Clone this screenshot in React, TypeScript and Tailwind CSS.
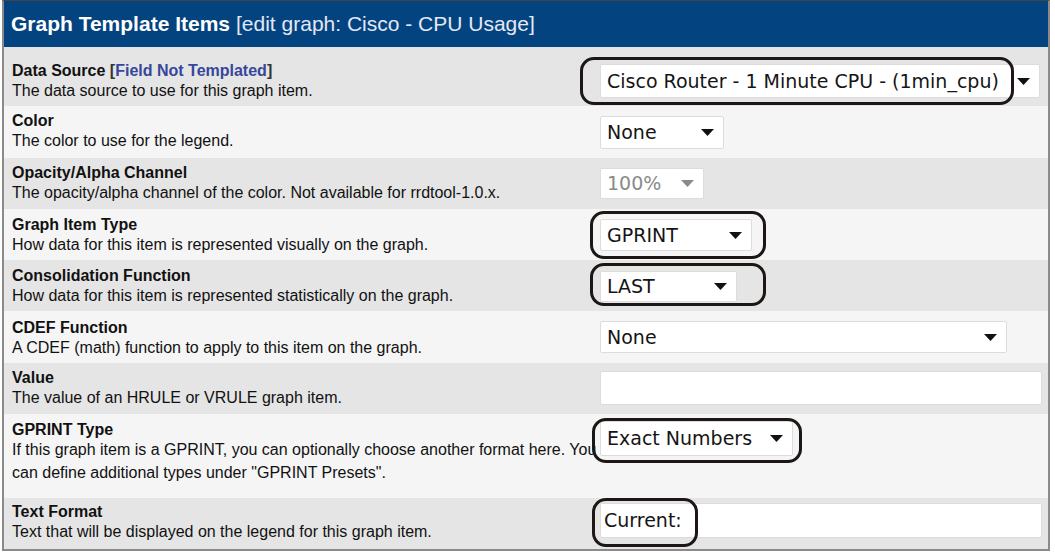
const labelFont = { fontFamily: '"Liberation Sans", Arial, sans-serif' };
const ctrlFont = { fontFamily: '"DejaVu Sans", Tahoma, sans-serif' };

type Ring = string | null;

type Row = {
  label: string;
  extra?: string;
  desc: React.ReactNode;
  h: string;
  lpt: string;
  cpt: string;
  kind: "select" | "input";
  value: string;
  size: string;
  disabled?: boolean;
  ring: Ring;
  bg: string;
};

const rows: Row[] = [
  {
    label: "Data Source",
    extra: "Field Not Templated",
    desc: "The data source to use for this graph item.",
    h: "h-[59px]",
    lpt: "pt-[14px]",
    cpt: "pt-[17px]",
    kind: "select",
    value: "Cisco Router - 1 Minute CPU - (1min_cpu)",
    size: "w-[440px] h-[34px]",
    ring: "-left-[20px] -top-[7px] w-[434px] h-[48px]",
    bg: "bg-[#e5e5e5]",
  },
  {
    label: "Color",
    desc: "The color to use for the legend.",
    h: "h-[52px]",
    lpt: "pt-[5px]",
    cpt: "pt-[10px]",
    kind: "select",
    value: "None",
    size: "w-[124px] h-[33px]",
    ring: null,
    bg: "bg-[#f5f5f5]",
  },
  {
    label: "Opacity/Alpha Channel",
    desc: "The opacity/alpha channel of the color. Not available for rrdtool-1.0.x.",
    h: "h-[51px]",
    lpt: "pt-[5px]",
    cpt: "pt-[10px]",
    kind: "select",
    value: "100%",
    size: "w-[104px] h-[31px]",
    disabled: true,
    ring: null,
    bg: "bg-[#e5e5e5]",
  },
  {
    label: "Graph Item Type",
    desc: "How data for this item is represented visually on the graph.",
    h: "h-[51px]",
    lpt: "pt-[6px]",
    cpt: "pt-[10px]",
    kind: "select",
    value: "GPRINT",
    size: "w-[152px] h-[32px]",
    ring: "-left-[10px] -top-[8px] w-[176px] h-[48px]",
    bg: "bg-[#f5f5f5]",
  },
  {
    label: "Consolidation Function",
    desc: "How data for this item is represented statistically on the graph.",
    h: "h-[51px]",
    lpt: "pt-[6px]",
    cpt: "pt-[11px]",
    kind: "select",
    value: "LAST",
    size: "w-[137px] h-[31px]",
    ring: "-left-[10px] -top-[8px] w-[176px] h-[43px]",
    bg: "bg-[#e5e5e5]",
  },
  {
    label: "CDEF Function",
    desc: "A CDEF (math) function to apply to this item on the graph.",
    h: "h-[52px]",
    lpt: "pt-[7px]",
    cpt: "pt-[10px]",
    kind: "select",
    value: "None",
    size: "w-[407px] h-[32px]",
    ring: null,
    bg: "bg-[#f5f5f5]",
  },
  {
    label: "Value",
    desc: "The value of an HRULE or VRULE graph item.",
    h: "h-[51px]",
    lpt: "pt-[5px]",
    cpt: "pt-[8px]",
    kind: "input",
    value: "",
    size: "w-[442px] h-[34px]",
    ring: null,
    bg: "bg-[#e5e5e5]",
  },
  {
    label: "GPRINT Type",
    desc: (
      <>
        If this graph item is a GPRINT, you can optionally choose another format here. You
        <br />
        <span className="leading-[26px]">can define additional types under "GPRINT Presets".</span>
      </>
    ),
    h: "h-[84px]",
    lpt: "pt-[6px]",
    cpt: "pt-[7px]",
    kind: "select",
    value: "Exact Numbers",
    size: "w-[193px] h-[35px]",
    ring: "-left-[8px] -top-[3px] w-[210px] h-[45px]",
    bg: "bg-[#f5f5f5]",
  },
  {
    label: "Text Format",
    desc: "Text that will be displayed on the legend for this graph item.",
    h: "h-[51px]",
    lpt: "pt-[4px]",
    cpt: "pt-[5px]",
    kind: "input",
    value: "Current:",
    size: "w-[442px] h-[35px]",
    ring: "-left-[8px] -top-[5px] w-[106px] h-[49px]",
    bg: "bg-[#e5e5e5]",
  },
];

function Arrow({ grey }: { grey?: boolean }) {
  return (
    <svg width="13" height="7" viewBox="0 0 13 7" className="shrink-0">
      <path d="M0 0 H13 L6.5 7 Z" fill={grey ? "#8a8a8a" : "#111"} />
    </svg>
  );
}

function Control({ row }: { row: Row }) {
  return (
    <div className="relative">
      {row.kind === "select" ? (
        <div
          style={ctrlFont}
          className={`${row.size} flex items-center justify-between bg-white border border-[#dcdcdc] rounded-[2px] pl-[6px] pr-[9px] text-[19px] ${
            row.disabled ? "text-[#8a8a8a] border-[#cfcfcf]" : "text-[#151515]"
          }`}
        >
          <span className="whitespace-nowrap">{row.value}</span>
          <Arrow grey={row.disabled} />
        </div>
      ) : (
        <div
          style={ctrlFont}
          className={`${row.size} flex items-center bg-white border border-[#dcdcdc] rounded-[2px] pl-[3px] text-[19px] text-[#151515]`}
        >
          {row.value}
        </div>
      )}
      {row.ring && (
        <span className={`absolute ${row.ring} border-[3px] border-[#1c1714] rounded-[14px] pointer-events-none`} />
      )}
    </div>
  );
}

export default function App() {
  return (
    <div className="w-[1055px] h-[553px] bg-white">
      <div className="ml-[2px] w-[1048px] border-t border-[#444] border-l-2 border-r-2 border-b-2 border-l-[#8a8a8a] border-r-[#8a8a8a] border-b-[#8a8a8a]">
        <div
          style={labelFont}
          className="h-[46px] bg-[#03437f] pl-[7px] flex items-center text-[21px] text-white"
        >
          <span className="font-bold">Graph Template Items</span>
          <span className="ml-[6px] text-[#e4e8f4]">[edit graph: Cisco - CPU Usage]</span>
        </div>
        {rows.map((row) => (
          <div key={row.label} className={`flex ${row.h} ${row.bg}`}>
            <div style={labelFont} className={`w-[596px] pl-[8px] ${row.lpt} text-[16px] leading-[20px]`}>
              <div className="font-bold text-[#111]">
                {row.label}
                {row.extra && (
                  <>
                    {" "}
                    <span className="text-[#333]">[</span>
                    <span className="text-[#36479b]">{row.extra}</span>
                    <span className="text-[#333]">]</span>
                  </>
                )}
              </div>
              <div className="text-[#111] whitespace-nowrap">{row.desc}</div>
            </div>
            <div className={row.cpt}>
              <Control row={row} />
            </div>
          </div>
        ))}
      </div>
    </div>
  );
}
